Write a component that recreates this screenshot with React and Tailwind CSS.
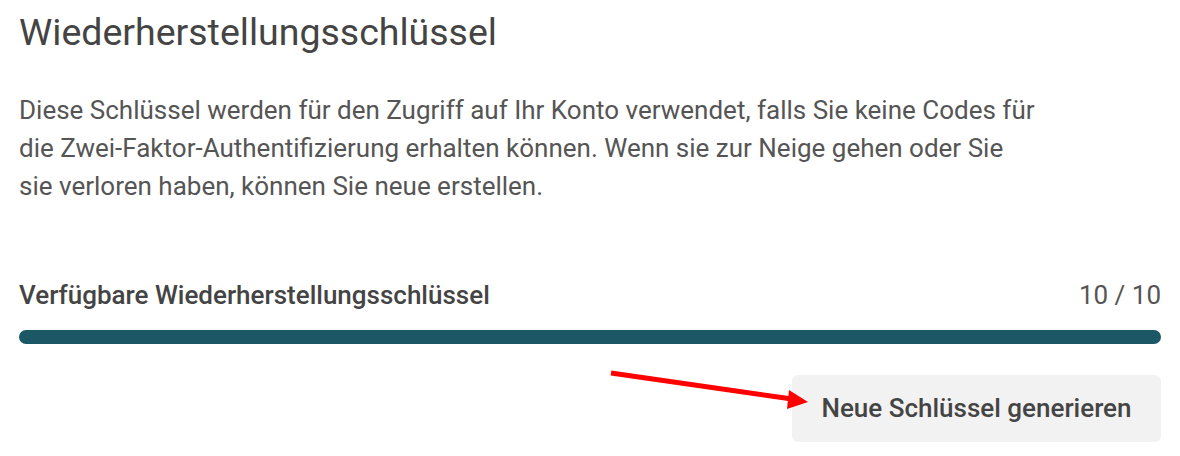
import React from 'react';

function RedArrow() {
  return (
    <svg
      className="absolute left-0 top-0 pointer-events-none"
      width="1180"
      height="456"
      viewBox="0 0 1180 456"
    >
      <line x1="611" y1="373" x2="792" y2="399" stroke="#ff0000" strokeWidth="5" />
      <polygon points="808,402 789,390 787,409" fill="#ff0000" />
    </svg>
  );
}

export default function App() {
  return (
    <div className="relative w-[1180px] h-[456px] bg-white overflow-hidden font-['Roboto',sans-serif]">
      <div className="pl-[19px] pr-[19px] pt-[9px]">
        <h2 className="text-[37.5px] leading-[46px] text-[#444444]">Wiederherstellungsschlüssel</h2>

        <p className="mt-[36px] w-[1100px] text-[26px] leading-[38px] text-[#555555]">
          Diese Schlüssel werden für den Zugriff auf Ihr Konto verwendet, falls Sie keine Codes für
          <br />
          die Zwei-Faktor-Authentifizierung erhalten können. Wenn sie zur Neige gehen oder Sie
          <br />
          sie verloren haben, können Sie neue erstellen.
        </p>

        <div className="mt-[75px] flex items-center justify-between text-[26px] leading-[30px]">
          <span className="font-medium text-[#444444]">Verfügbare Wiederherstellungsschlüssel</span>
          <span className="text-[#555555]">10 / 10</span>
        </div>

        <div className="mt-[20px] h-[14px] rounded-full bg-[#1c5766]" />

        <div className="mt-[31px] flex justify-end">
          <button className="w-[369px] h-[67px] rounded-[6px] bg-[#f2f2f2] text-[26px] font-medium text-[#444444]">
            Neue Schlüssel generieren
          </button>
        </div>
      </div>
      <RedArrow />
    </div>
  );
}
